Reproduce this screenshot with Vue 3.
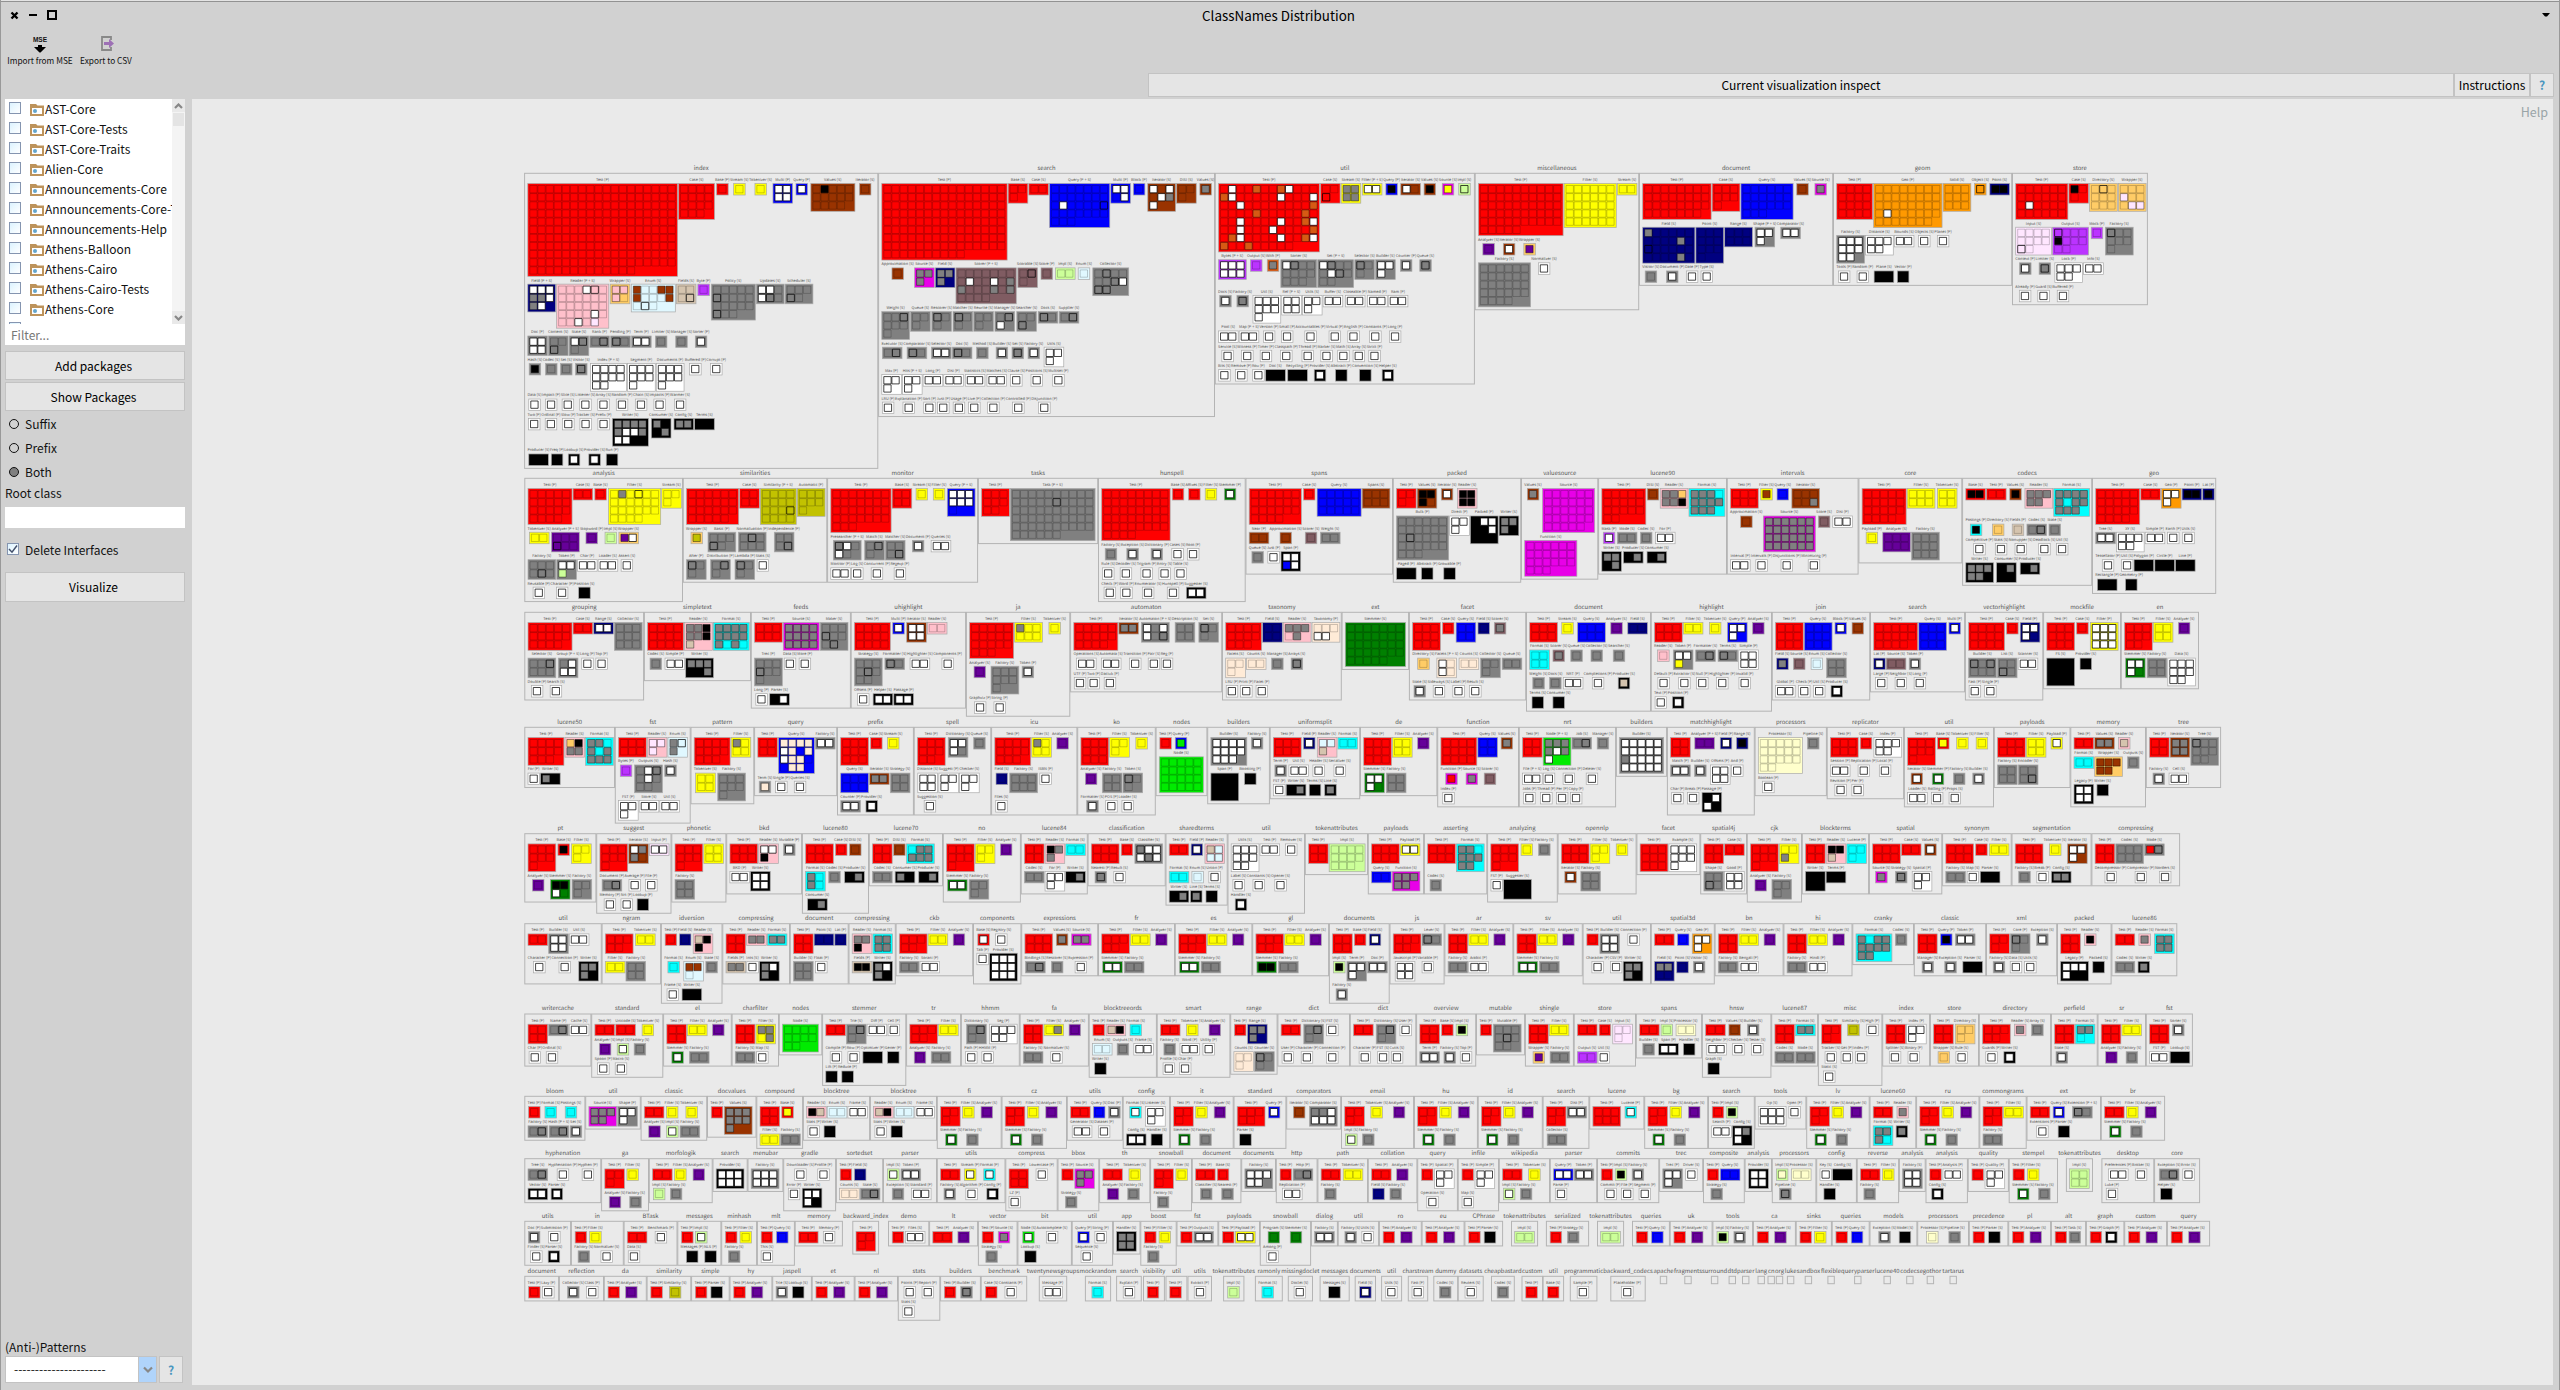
<script setup>
const packages = [
  'AST-Core', 'AST-Core-Tests', 'AST-Core-Traits', 'Alien-Core', 'Announcements-Core',
  'Announcements-Core-T', 'Announcements-Help', 'Athens-Balloon', 'Athens-Cairo',
  'Athens-Cairo-Tests', 'Athens-Core', ''
]
const modes = ['Suffix', 'Prefix', 'Both']
const selectedMode = 'Both'

const palette = {
  r: '#ff0000', b: '#0000ff', y: '#ffff00', n: '#993300', g: '#808080', w: '#ffffff', k: '#000000',
  N: '#000080', p: '#ffc0cb', m: '#e800e8', v: '#bb33ff', l: '#ccff99', c: '#00ffff', e: '#e0f8ff',
  o: '#ff9900', t: '#ffcc66', a: '#d5c4ae', u: '#660099', G: '#008000', L: '#00eb00', s: '#805c62',
  O: '#c2c200', i: '#ffe6ff', z: '#ffffcc', x: '#ffebd7', d: '#d65a14'
}

// Package line: name x [end] | groups, ";" between rows of groups.
// Group: Label + P/S/B, colour, columns:count, =cell colours ("." own colour, "D" own colour with dark outline).
const bands = [
  [173.3, `
index 524.6 | Test P r18:193,Case S r4:15,Base P r,Stream S y,Tokenizer S y,Multi P b2:4=wwww,Query P b=w,Values S n5:14=.k,Iterator S n;Field B N3:8=wwwggwgw,Reader B p6:29=...wD.................w...w.i,Wrapper S t2:4=ppp,Enum S e5:13=n..nnn...n.D.,Fields S a2:4=...D,Byte P v,Policy S g5:18=.....D.........D,Updates S g3:6=ww.wD.,Scheduler S g3:5=...D;Doc P g2:4=wwww,Content S g2:3=..D,State S g2:3=wD.,Rank P g2:2=.D,Pending P g2:2=D.,Term P g2:2=ww,Limiter S g,Manager S g,Sorter P g=w;Hash S g=k,Codec S g,Set S g,Visitor S g=D,Index B w4:10,Segment P w3:7,Documents P w3:7,Buffered P w,Corrupt P w;Data S w,Impact P w,Slice S w,Listener S w,Array S w,Random P w,Chain S w,Impacts P w,Warmer S w;Two P w,Ordinal P w,Slow P w,Tracker S w,Prefix P w,Writer S k4:12=gggggwwgww,Consumer S k2:4=g..g,Config S k2:2=gg,Terms S k2:2;Producer S k2:2,Freq P k,Lookup S k=w,Provider S k=w,Run P k
search 878.6 | Test P r15:130,Base S r2:3,Case S r2:2,Query B b7:31=...............w....D,Multi P b2:4=ww.w,Block P b,Iterator S n3:7=w.w.wgw,DISI S n2:3,Values S n=g;Approximation S n,Source S m2:3=ggg,Field S N2:3=ggg,Scorer B s7:25=........w..w.gg...g.g,Scorable S s2:3=.D.,Score P s,Impl S l2:2,Enum S e,Collector S g4:10=.D....DwDD;Weight S g3:7=..D,Queue S g2:3,Rescorer S g2:3=D,Matcher S g2:3=D,Rewrite S g2:3,Manager S g2:3=.Dw,Searcher S g2:3=..D,Docs S g2:2=D,Supplier S g2:2=.D;Executor S g2:2=.D,Comparator S g2:2=D,Selector S g2:2=ww,Doc S g2:2=D,Method S g,Builder S g=w,Set S g=D,Factory S g=w,Utils S w2:3;Max P w2:3,Hits B w2:3,Long P w2:2,Disi P w2:2,Statistics S w2:2,Matches S w2:2,Clause S w,Positions S w,Multiset P w;LRU P w,Explanation P w,Sort P w,Just P w,Usage P w,Live P w,Collection P w,Controlled P w,Disjunction P w
util 1215.3 | Test P r12:93=.w..d..dw...dw.....w...w..w........d....d.....d...w....w..dw..w...w....d.dw....w..dwd..d,Case S r2:3=..D,Stream S y2:4=gggg,Filter B y2:2=ww,Query P b=k,Iterator S n2:2=w.,Values S n=k,Source S m=y,Impl S l=D;Bytes B v3:6=wwwwww,Output S v,With P d=g,Sorter S g4:11=wD,Set B g4:10=wD...wD,Selector S g2:3=D,Builder S g2:3=www,Counter P g=w,Queue S g=D;Docs S g=w,Factory S g=D,Util S w3:7,Ref B w2:4,Utils S w2:3,Buffer S w2:2,Closeable P w2:2,Named P w2:2,Ram P w2:2;Pool S w2:2,Map B w2:2,Version P w,Small P w,Accountables P w,Virtual P w,English P w,Constants P w,Long P w;Service S w,Witness P w,Timer P w,Classpath P w,Thread P w,Marker S w,Math S w,Array S w,Strict P w;Bits S w,Remove P w,Rou P w,Doc S k2:2,Recycling P k2:2,Provider S k=w,Abstract P k,Convention S k,Helper S k=w
miscellaneous 1475.2 | Test P r10:55,Filter S y6:30,Stream S y2:2;Analyzer S u,Iterator S n=w,Wrapper S t=u;Factory S g6:28,Normalizer S w
document 1639.5 | Test P r8:31,Case S r3:7,Query S b6:21,Values S n,Source S m=g;Field S N6:24=g.........g.D.........g.,Point S N3:10,Range S N3:6,Shape B g2:3=www,Comparator S g2:2=ww;Visitor S g,Document P g=w,Date P w,Type S w
geom 1833.5 | Test P r4:16,Geo P o8:39=.........................w,Solid S o3:9,Object S o=D,Point S N2:2=kk;Factory S g3:8=wwwwwwww,Distance S w3:5,Bounds S w2:2,Objects S w,Planet P w;Tools P w,Random P w,Plane S k2:2,Vector P k
store 2012.5 2147.4 | Test P r6:24=.............w,Case S r2:3=k,Directory S t3:9=.D,Wrapper S t3:9=...i...ii;Input S i4:10=........D.,Output S v4:10=D...k,Mock P v,Factory S g3:7=D;Context P g=w,Limiter S g=D,Lock P w3:5,Info S w2:2;Already P w,Guard S w,Buffered P w`],
  [478.3, `
analysis 524.8 | Test P r5:19,Case S r2:2,Base S r,Filter S y6:22=.g.D,Stream S y2:3;Tokenizer S y2:2,Analyzer B u3:6=...D,Stopword P u,Impl S l,Wrapper S t2:2=uw;Factory S g3:6=....D,Token P g2:3=wwl,Char P w2:2,Loader S w2:2,Assert S w;Reusable P w,Character P w,Position S k
similarities 683.3 | Test P r6:23,Case S r2:4,Similarity B O4:16=...........D,Automatic P O3:7;Wrapper S t=O,Basic P g3:5=...D,Normalization P g3:6=.D,Independence P g2:4=...D;After P g2:3=D,Distribution P g2:3=.D,Lambda P g2:3=D,Stats S w
monitor 827.6 | Test P r7:31,Base S r2:4,Stream S y,Filter S y,Query B b3:7=wwwwww;Presearcher B g3:5=Dw.w,Match S g2:3=.D,Matcher S g2:4=...D,Document P g=w,Queries S w2:2;Monitor P w2:2,Log S w,Concurrent P w,Regexp P w
tasks 978.4 | Test P r3:8,Task B g10:56=...............D
hunspell 1098.5 | Test P r8:44,Base S r,Affixes S r,Filter S y,Stemmer P G=w;Factory S g,Exception S g=w,Dictionary P g=w,Cases S w,Root P w;Rule S w,Decoder S w,Trigram P w,Entry S w,Table S w;Check P w,Word P w,Enumerator S w,Hunspell P w,Suggester S k2:2=ww
spans 1246 | Test P r6:22,Case S r,Query S b5:15,Spans S n3:6;Near P n2:2,Approximation S n,Scorer S s,Weight S g2:2;Queue S g,Just P w,Span P k2:4=wwbw
packed 1393.3 | Test P r2:3,Values S n2:4=kkk,Iterator S n=w,Reader S p2:4=kkkk;Bulk P g6:27=.............D,Direct P w2:3,Packed P k3:9=.ww..w,Writer S k2:4=ggg;Paged P k2:2,Abstract P k,Growable P k
valuesource 1521.5 | Values S n=g,Source S m6:29;Function S m6:21
lucene90 1598.6 | Test P r5:17,DISI S n,Reader S p3:6=ggtggk,Format S c4:11=ggg.ggggggg;Mask P v=w,Mode S g2:2,Codec S g,For P w2:2;Writer S k2:4=gg.g,Producer S k2:2=.g,Consumer S k2:2=.g
intervals 1727.3 | Test P r3:6,Filter S y=n,Query S b,Iterator S n3:6=.....g;Approximation S n,Source S m6:24=gggggggggggggggggggggggg,Score S s,Disi P w2:2;Interval P w2:2,Intervals P w,Disjunctions P w,Minimizing P w
core 1858.9 | Test P r5:19,Filter S y3:6,Tokenizer S y2:4;Payload P y,Analyzer S u3:6,Factory S g3:9
codecs 1962.6 | Base S r2:2=kk,Test P r2:2,Values S n=k,Reader S p3:5=ggggg,Format S c4:11=ggggg.ggggg;Postings P c=k,Directory S t,Fields P a,Codec S g2:2=.D,State S g;Competitive P w,Stats S w,Nonupper S w,Deadlock S w,Util S w;Writer S k3:5=ggggg,Consumer S k2:4=.g,Producer S k2:2=.g
geo 2092.5 2215.7 | Test P r5:19,Case S r2:2,Geo P o2:3=www,Point P N2:2=kk,Lat P N=k;Tree S g2:2=ww,XY S w3:5,Simple P w2:2,Earth P w,Utils S w;Tessellator P w,Util S w,Polygon P k2:2,Circle P k2:2,Line P k2:2;Rectangle P k2:2,Geometry P k`],
  [612.3, `
grouping 524.8 | Test P r5:14,Case S r2:2,Range S N2:2=ww,Collector S g3:9;Selector S g3:6=..D,Group B g2:4=.www,Long P w,Top P w;Double P w,Search S w
simpletext 644.4 | Test P r4:12,Reader S p3:7=ggkggka,Format S c4:12=ggggggggg.g.;Codec S g,Simple P w2:2,Writer S k3:6=ggg..g
feeds 751.3 | Test P r3:6,Source S m4:12=gggggggggggg,Maker S g3:8=...D...D;Trec P g3:7=...D,Data S w,More P w;Long P w,Parser S k2:2=.w
uhighlight 851.2 | Test P r4:12,Multi P b=w,Iterator S n2:4=wwww,Reader S p2:2;Strategy S g3:8=....D,Formatter S g2:2=D,Highlighter S w2:2,Components P w;Offsets P w,Helper S k2:2=ww,Passage P k2:2=ww
ja 966.4 | Test P r5:18,Filter S y3:6=g,Tokenizer S y;Analyzer S u,Factory S g3:7,Token P g=w;Graphviz P w,String P w
automaton 1070.6 | Test P r5:14,Iterator S n2:2=gg,Automaton B g3:6=w.ww.D,Description S g2:4,Set S g2:3=D;Operations S w2:2,Automata S w2:2,Transition P w,Pair S w,Reg P w;UTF P w,Two P w,Daciuk P w
taxonomy 1222.5 | Test P r4:11,Field S N2:4,Reader S p3:5=ggg.g,Taxonomy P x3:5=...ww;Facets S x2:3,Counts S x2:2,Manager S g,Arrays S g=D;LRU P w,Print P w,Facet P w
ext 1342.1 | Stemmer S G7:33
facet 1409.4 | Test P r3:9,Case S r,Query S b2:4,Field S N,Scorer S s=g;Directory S t,Facets B x2:4=w.w.,Counts S x2:2,Collector S g2:3,Queue S g2:2;State S g=w,Sideways S w,Label P w,Result S w
document 1526.5 | Test P r3:6,Stream S y,Query S b3:6,Analyzer S u,Field S N2:2;Format S c2:4,Scorer S s=g,Queue S g,Collector S g,Searcher S g;Weight S g,Docs S g,NRT P w2:2,Completions P w,Producer S k=a;Terms S k,Consumer S k
highlight 1651.3 | Test P r3:6,Filter S y2:2,Tokenizer S y,Query P b2:3=www,Analyzer S u;Reader S p,Token P g2:3=wwy,Formatter S g2:2=.D,Terms S g2:2=D,Simple P w2:4;Default P w,Extractor S w,Null P w,Highlighter P w,Invalid P w;Text P w,Position P k=w
join 1772.3 | Test P r3:9,Query S b3:9,Block P b=w,Values S n;Field S N=g,Source S s,Enum S e,Collector S g2:4;Global P w2:2,Check P w,Util S w,Producer S k=w
search 1870.5 | Test P r5:14,Query S b3:9,Multi P b=w;Lat P N=w,Source S s2:2,Token P g=w;Large P w,Neighbor S w,Long P w
vectorhighlight 1965.4 | Test P r4:12,Case S r,Field P N2:4=www;Builder S g3:6=D.D,List S g2:4=..D,Scanner S w2:2;Fast P w,Single P w
mockfile 2043.6 | Test P r3:9,Case S r,Filter P y3:9=wwwwwwwww;FS S k3:9,Provider S k
en 2121.3 2198.5 | Test P r3:8,Filter S y2:4,Analyzer S u;Stemmer S G2:4=www,Factory S g2:4,Data S w3:8`],
  [727.3, `
lucene50 524.8 | Test P r4:11,Reader S p2:4=tkgg,Format S c3:9=gg.g.gggg;For P w,Writer S k2:2=g
fst 615.3 | Test P r3:6,Reader S p2:3=iii,Enum S e2:3=gDg;Bytes P v,Outputs S g3:8=.wD.w,Hash S g=w;FST P w2:3,Store S w2:2,Util S w2:2
pattern 691 | Test P r4:11,Filter S y2:4=g;Tokenizer S y2:4,Factory S g3:7
query 754.6 | Test P r2:4,Query S b4:15=xxxxwx.xwxx..xx,Factory S g2:2=ww;Term S g=x,Single P w,Queries S w
prefix 837.5 | Test P r3:9,Case S r,Stream S y;Query S b3:6,Iterator S n2:2=gg,Strategy S g2:4;Counter P g2:2=ww,Provider S k=w
spell 914.2 | Test P r3:8,Dictionary S g2:4=www,Queue S g;Distance S w2:4,Suggest P w2:3,Checker S w2:3;Suggestion S w
icu 991.6 | Test P r4:11,Filter S y2:4=g,Analyzer S u;Field S N,Factory S g3:6,ISBN P w;Files S w
ko 1077.7 | Test P r3:9,Filter S y2:3,Tokenizer S y;Analyzer S u,Factory S g2:4,Token S g2:3=D;Formatter S g=w,POS P w,Loader S w
nodes 1156.1 | Test P r,Query P b=L;Node S L5:20
builders 1207.7 | Builder S g4:11=wwwwwwwwwww,Factory S g=w;Span P k3:9,Boosting P k
uniformsplit 1270.2 | Test P r3:6,Field P N=w,Reader S p2:3=eea,Format S c2:2;Term P g=w,Util S w2:2,Header S w,Serializer S w;FST P w,Writer S k2:2=.g,Terms S k,Line S k=g
de 1360.5 | Test P r3:9,Filter S y2:4,Analyzer S u;Stemmer S G2:4=www,Factory S g2:4
function 1437.7 | Test P r4:12,Query S b2:4,Values S n=g;Function P m=r,Source S m=g,Scorer S s;Index P w
nrt 1519.3 | Test P r2:4,Node B L3:7=ggggwgw,Job S g2:2=.D,Manager S g;File B w2:2,Log S w,Connection P w,Deleter S w;Jobs P w,Thread P w,Per P w,Copy P w
builders 1616.4 | Builder S g5:20=wwwwwwwwwwgwwwwwwwww
matchhighlight 1667.4 | Test P r2:4,Analyzer B u2:2,Field P N=w,Range S N=k;Match P g2:2=ww,Builder S g=w,Offsets P w2:4,And P w;Char P w,Break P w,Passage P k2:4=.ww.
processors 1755.1 | Processor S z5:17,Pipeline S g;Boolean P w
replicator 1827.2 | Test P r3:6,Case S r,Index P w3:5;Session P w2:2,Replication P w,Local P w;Revision P w,Per P w
util 1904.4 | Test P r3:7,Base S r=y,Tokenizer S y,Filter S y;Iterator S n=w,Stemmer P G=w,Factory S g,Builder S g=w;Loader S w2:2,Rolling P w,Props S w
payloads 1994.3 | Test P r3:6,Filter S y2:4,Payload P y=w;Factory S g2:4,Encoder S g2:4=...D
memory 2070.8 | Test P r2:2,Values S n2:2=gg,Reader S p=a;Format S c2:2,Wrapper S t3:5=nnnnn,Outputs S g;Legacy P k2:4=wwww,Writer S k
tree 2146.3 2220.6 | Test P r2:4,Iterator S n2:4=gggg,Tree S g3:8=D;Factory S g=w,Cell S w2:2`],
  [833.7, `
pt 524.8 | Test P r3:7,Base S r=k,Filter S y2:3;Analyzer S u,Stemmer S G2:4=kkw,Factory S g2:3
suggest 596.7 | Test P r3:7,Iterator S n2:4=wgg,Input P i2:2=ww;Document P g2:2=.D,Average P w,File P w;Memory P w,Nrt P w,Lookup P k
phonetic 671.8 | Test P r3:7,Filter S y2:4;Factory S g2:4
bkd 726.7 | Test P r3:6,Reader S p2:3=wwk,Mutable P g=w;BKD P w2:2,Writer S k2:4=wwww
lucene80 802.4 | Test P r3:6,Case S r,DISI S n;Format S c2:4=g.g.,Codec S g,Producer S k2:2=.g;Consumer S k2:2=.g
lucene70 869.3 | Test P r2:4,DISI S n,Format S c3:6=.ggggg;Codec S g2:2,Consumer S k2:2=g,Producer S k2:2=.g
no 943.3 | Test P r3:7,Filter S y2:3,Analyzer S u;Stemmer S G2:2=ww,Factory S g2:3
lucene84 1021.2 | Test P r2:4,Reader S p2:3=kgg,Format S c2:2;Codec S g2:2,For P w2:3,Writer S k2:2=.g
classification 1088.1 | Test P r3:6,Base S r,Classifier S g3:6=DwwwDw;Nearest P g=D,Result S w
sharedterms 1166 | Test P r2:2,Field P N=w,Reader S p2:4=aeee;Format S c2:2,Enum S e,Union P w;Writer S k2:2=.g,Line S k=g,Terms S k
util 1228 | Utils S w3:8,Test P w2:2,Remover S w;Label S w,Constants S w,Opener S w;Handler S k=w
tokenattributes 1305.3 | Test P r2:4,Impl S l4:11
payloads 1368.3 | Test P r3:6,Payload P y2:2=ww;Query S b2:2,Function S m3:5=ggggg
asserting 1424.4 | Test P r3:6,Format S c3:8=gg.ggggg;Codec S g
analyzing 1487.6 | Test P r3:7,Filter S y,Factory S g;FST P w,Suggester S k3:6
opennlp 1558.1 | Test P r3:6,Filter S y2:3,Tokenizer S y;Iterator S n=w,Factory S g2:4
facet 1636.9 | Test P r3:9,Example S w3:7
spatial4j 1700.7 | Test P r2:4,Case S r2:2;Shape S g2:4=..D,Good P w2:4
cjk 1747.3 | Test P r3:7,Filter S y2:3=..g;Analyzer S u,Factory S g2:3
blockterms 1802.3 | Test P r2:4,Reader S p2:3=kka,Lucene P c2:3;Writer S k2:4,Terms P k2:2
spatial 1869.4 | Test P r3:6,Case S r2:2,Values S n=w;Source S m=g,Strategy S g=D,Spatial P w2:3
synonym 1942.6 | Test P r3:6,Case S r,Filter S y2:2;Factory S g2:2,Map S w,Parser S k2:2
segmentation 2012 | Test P r3:6,Tokenizer S y,Iterator S n2:3=www;Factory S g,Break P w,Config S k2:2=gg
compressing 2091.9 2179.6 | Test P r2:4,Codec S g3:6,Mode S g2:2=rD;Decompressor P w,Compressor P w,Norders S w`],
  [923.7, `
util 524.8 | Test P r2:2,Builder S g2:4=wwww,Util S w2:2;Character P w,Connection P w,Writer S k2:4=ggg
ngram 602.1 | Test P r3:5,Tokenizer S y2:2;Filter S y2:2,Factory S g2:4
idversion 661.4 | Test P r,Field S N,Reader S p2:3=akk;Format S c,Enum S e2:3=nn.,State S g;Frame S w,Writer S k2:2
compressing 722.8 | Test P r2:4,Reader S p2:2=gg,Format S c2:2=gg;Fields P a2:2=gg,Ints S w,Writer S k2:4=gwg
document 790.3 | Test P r2:4,Point S N2:2,Lat P N;Builder S g2:4,Float P w
compressing 849 | Reader S p2:3=ggk,Format S c2:4=gggg;Fields P a2:2=kk,Writer S k2:3=gwg
ckb 896.1 | Test P r3:5,Filter S y2:2,Analyzer S u;Factory S g2:2,Sorani P w2:2
components 973.5 | Base S r=w,Registry S w;Tab P w,Provider S k3:9=wwwwwwwww
expressions 1021.7 | Test P r3:6,Values S n=g,Source S m2:2=gg;Bindings S g2:2=.D,Rescorer S g,Expression P w
fr 1098.5 | Test P r3:5,Filter S y2:2,Analyzer S u;Stemmer S G2:2=ww,Factory S g2:2
es 1175.3 | Test P r3:5,Filter S y2:2,Analyzer S u;Stemmer S G2:2=ww,Factory S g2:2
gl 1252.7 | Test P r3:5,Filter S y2:2,Analyzer S u;Stemmer S G2:2=kk,Factory S g2:2
documents 1329.4 | Test P r2:4,Base S r,Field S N=w;Impl S l=k,Term P g2:3=www,Doc P g2:2=ww;Factory S g=w
js 1390 | Test P r3:5,Lexer S g2:2=D;Javascript P w2:4,Variable P w
ar 1444.9 | Test P r2:4,Filter S y2:2,Analyzer S u;Factory S g2:2,Arabic P w2:2
sv 1513.7 | Test P r2:4,Filter S y2:2,Analyzer S u;Stemmer S G2:2=ww,Factory S g2:2
util 1583.1 | Test P r,Builder S g2:4=wwww,Connection P w;Character P w,CSV P w,Writer S k2:4=ggg
spatial3d 1651.3 | Test P r2:2,Query S b,Geo P o2:3=www;Field S N2:4=gg,Point S N,Visitor S g=w
bn 1715.1 | Test P r2:4,Filter S y2:2,Analyzer S u;Factory S g2:2,Bengali P w2:2
hi 1783.9 | Test P r2:4,Filter S y2:2,Analyzer S u;Factory S g2:2,Hindi P w2:2
cranky 1852.8 | Format S c4:10=g.gggggggg,Codec S g
classic 1914.3 | Test P r2:4,Query P b=k,Token P g2:2=ww;Manager S g=w,Exception S g=w,Parser S k2:2
xml 1986.5 | Test P r2:3,Core P g2:3=D,Exception S g=w;Factory S g=w,Data S w,Utils S w
packed 2057.5 | Test P r2:4,Reader S p=k;Legacy P k3:5=wwww,Packed S k
lucene86 2111.9 2176.8 | Test P r2:2,Reader S p=g,Format S c2:4=gggg;Codec S g2:2,Writer S k=g`],
  [1014, `
writercache 524.8 | Test P r2:4,Name P g2:2=.D,Cache S w2:2;Char P w,Ordinal S w
standard 591.7 | Test P r2:2,Unicode S r2:2,Tokenizer S y;Analyzer S u,Impl S l=w,Factory S g;Spoon P w,Macro S w
el 663.6 | Test P r2:4,Filter S y2:2,Analyzer S u;Stemmer S G=w,Factory S g2:2
charfilter 732.1 | Test P r2:4,Filter S y2:4=gg.g;Factory S g2:2,Map S w
nodes 779.3 | Node S L4:10
stemmer 822.6 | Test P r2:2,Trie S g2:3=.D,Diff P w2:2,Cell P w;Compile P w,Row P w,Optimizer P k2:2,Gener P k;Lift P k,Reduce P k
tr 906.6 | Test P r3:5,Filter S y2:2;Analyzer S u,Factory S g2:2
hhmm 961.4 | Dictionary S g2:3=.D,Seg P w3:5;Path P w,HHMM P w
fa 1020.1 | Test P r2:4,Filter S y2:2=.g,Analyzer S u;Factory S g2:2,Normalizer S w
blocktreeords 1089.2 | Test P r,Reader S p2:2=ak,Format S c;Enum S e2:2,Outputs S g,Frame S w2:2;Writer S k
smart 1157.2 | Test P r2:2,Tokenizer S y,Analyzer S u;Factory S g,Word P w2:2,Utility P w;Profile S w,Char P w
range 1230.7 | Test P r,Range S N2:3=ggg;Counts S x2:3,Counter S g2:3=D
dict 1277.9 | Test P r2:2,Dictionary S g2:3=.D,FST S w;User P w,Character P w,Connection P w
dict 1350.3 | Test P r2:2,Dictionary S g2:3=.D,User P w;Character P w,FST S w,Cutis S w
overview 1416.6 | Test P r2:4,Base S r,Impl S l=k;Term P g2:2=ww,Factory S g=w,Top P w
mutable 1476.5 | Test P r,Mutable P g3:8=....D
shingle 1525.4 | Test P r2:4,Filter S y2:2;Wrapper S t=u,Factory S g2:2
store 1574.2 | Test P r2:2,Case S r,Input S i2:3;Output S v2:2,Util S w
spans 1636.3 | Test P r2:2,Impl S l,Processor S z2:2;Builder S g,Span P k2:2=ww,Handler S k
hnsw 1702.4 | Test P r2:2,Values S n,Builder S g=w;Neighbor P w2:2,Checker S w,Tester S w;Graph S k
lucene87 1771.7 | Test P r2:4,Format S c2:2=gg;Codec S g2:2,Mode S g2:2
misc 1818.4 | Test P r2:3,Similarity S O,High P w;Tracker S w,Get P w,Index P w;Static S w
index 1882.7 | Test P r2:4,Index P w2:3;Splitter S w,Binary P w
store 1930.4 | Test P r2:4,Directory S t2:3;Wrapper S t,Rule S w
directory 1979.3 | Test P r3:5,Reader S p=g,Array S g;Guards P w,Writer S k=w
perfield 2051.4 | Test P r2:4,Format S c2:3=gg.;State S g=w
sr 2098 | Test P r2:4,Filter S y2:2;Analyzer S u,Factory S g
fst 2146.3 2192.4 | Test P r2:4,Sorter S g=w;FST P w2:2,Lookup S k2:2`],
  [1096.3, `
bloom 524.8 | Test P r,Format S c,Postings S c;Factory S g2:2=.D,Hash B g2:2=.D,Set S g=w
util 585.7 | Source S m3:5=ggggg,Shape P g2:3=www
classic 641.1 | Test P r2:2,Filter S y,Tokenizer S y;Analyzer S u,Impl S l=w,Factory S g2:2
docvalues 707.5 | Test P r,Values S n3:7=ggggggg
compound 756.8 | Test P r2:4,Base S r=y;Filter S y2:2,Factory S g2:2
blocktree 803.4 | Reader S p2:2=ka,Enum S e2:2,Frame S w2:2;Stats P w,Writer S k
blocktree 870.4 | Reader S p2:2=ak,Enum S e2:2,Frame S w2:2;Stats P w,Writer S k
fi 937.3 | Test P r2:3,Filter S y,Analyzer S u;Stemmer S G=w,Factory S g
cz 1002 | Test P r2:3,Filter S y,Analyzer S u;Stemmer S G=w,Factory S g
utils 1067.3 | Test P r2:2,Query S b,Doc P g=w;Generator S w2:2,Dataset P w
config 1123.2 | Format S c=w,Listener S w2:3;Config S k2:2=ww,Handler S k
it 1170.4 | Test P r2:3,Filter S y,Analyzer S u;Stemmer S G=w,Factory S g
standard 1234 | Test P r3:5,Query P b=w;Parser S k
comparators 1286.7 | Iterator S n,Comparator S g3:6=ggwwww
email 1341.5 | Test P r2:3,Tokenizer S y,Analyzer S u;Impl S l=w,Factory S g
hu 1414.4 | Test P r2:3,Filter S y,Analyzer S u;Stemmer S G=w,Factory S g
id 1478.2 | Test P r2:3,Filter S y,Analyzer S u;Stemmer S G=w,Factory S g
search 1543.1 | Test P r2:3,Dist P g2:2=ww;Collector S g2:2
lucene 1589.7 | Test P r3:6,Lucene P c=w
bg 1644.7 | Test P r2:3,Filter S y,Analyzer S u;Stemmer S G=w,Factory S g
search 1708.5 | Test P r,Impl S l=k;Search P w2:2,Config S k2:4=wgw
tools 1755.1 | Op S w3:6,Open P w
lv 1806.7 | Test P r2:3,Filter S y,Analyzer S u;Stemmer S G=w,Factory S g
lucene60 1870 | Test P r2:2,Reader S p=g;Format S c2:4=ggg,Writer S k=g
ru 1916.6 | Test P r2:3,Filter S y,Analyzer S u;Stemmer S G=w,Factory S g
commongrams 1979.8 | Test P r2:3,Filter S y2:2;Factory S g2:2
ext 2027 | Test P r2:2,Query S b=w,Extension B g2:2=D;Extensions P w,Parser S k
br 2101.3 2164.6 | Test P r2:2,Filter S y,Analyzer S u;Stemmer S G=w,Factory S g`],
  [1158.7, `
hyphenation 524.8 | Tree S g2:2=.D,Hyphenation P w,Hyphen P w;Vector S k2:2=ww,Parser S k=w
ga 601.6 | Test P r2:3,Filter S y;Analyzer S u,Factory S g
morfologik 649.3 | Test P r2:2,Filter S y,Analyzer S u;Impl S l,Factory S g
search 713 | Provider S k3:6=wwwwww
menubar 748 | Factory S g3:6=wwwwww
gradle 783.7 | Downloader S w,Profile P w;Error P w,Writer S k2:3=www
sortedset 836.4 | Test P r,Field S N;Counts S x2:2,State S g2:2=.D
parser 883.5 | Impl S l=w,Token P g2:2=ww;Exception S g,Standard P w2:2
utils 937.3 | Test P r2:2,Stream P y=w,Format P c=w;Factory S g=w,Algorithm P w,Config P k=w
compress 1005.8 | Test P r2:4,Lowercase P w;LZ P w
bbox 1058 | Test P r,Source S m2:3=ggg;Strategy S g
th 1099.6 | Test P r2:2,Tokenizer S y;Analyzer S u,Factory S g
snowball 1150.6 | Test P r2:3,Filter S y;Factory S g
document 1192.3 | Test P r2:2,Base S r;Classifier S g,Nearest P g
documents 1241.7 | Factory S g3:5=wwwww
http 1276.3 | Test P r,Http P g2:2=.D;Replication P w2:2
path 1317.9 | Test P r2:2,Tokenizer S y2:2;Factory S g
collation 1368.3 | Test P r2:2,Analyzer S u;Field S N,Factory S g
query 1417.7 | Test P r,Spatial P w2:3;Operation S w
infile 1458.2 | Test P r,Simple P w2:3;Map S w
wikipedia 1499.3 | Test P r2:2,Tokenizer S y;Impl S l=w,Factory S g
parser 1550.3 | Query P b2:2=ww,Token P g2:2=ww;Parse P w
commits 1597.5 | Test P r,Impl S l=k,Factory S g=w;Commit P w,File P w,Segment P w
trec 1659.6 | Trec P g2:3=www,Driver S w
composite 1703.5 | Test P r,Query S b2:2;Strategy S g
analysis 1745.1 | Provider S k2:4=wwww
processors 1772.3 | Impl S l=z,Processor S z2:2;Pipeline S g=D
config 1816.7 | Key S w,Config S k2:2;Handler S k
reverse 1857.2 | Test P r2:2,Filter S y;Factory S g
analysis 1899.4 | Factory S g2:4=wwww
analysis 1926 | Test P r,Analysis P w2:2;Config S k=w
quality 1968.2 | Test P r,Quality P w2:3
stempel 2009.2 2057.5 | Test P r,Filter S y;Stemmer S G=w,Factory S g
tokenattributes 2066.4 2092.5 | Impl S l2:4
desktop 2101.9 | Preferences P w2:2,Broker S w;Luke P w
core 2154.6 2199.6 | Exception S g2:2=.D,Error S w;Helper S k`],
  [1221.3, `
utils 524.8 | Doc P g=w,Submission P w;Finder S w,Parser S k=w
in 571.4 | Test P r,Filter S y;Factory S g,Normalizer S w
BTask 624.1 | Test P r2:2,Benchmark P w;Data S w
messages 677.8 | Test P r,Impl S l=w;Messages P k,NLS P k
minhash 721.7 | Test P r,Filter S y;Factory S g
mlt 757.4 | Test P r,Query S b;This S w
memory 795.2 842.4 | Test P r2:2,Memory P w
backward_index 852.8 878.6 | Test P r2:3
demo 888.5 | Test P r,Files S w2:2
lt 929.6 | Test P r2:2,Analyzer S u
vector 978.4 | Test P r,Source S m=g;Strategy S g
bit 1017.9 | Node S L=w,Autocomplete S w;Lookup S k
util 1072.2 | Query P b=w,String P w;Sequence S w
app 1113.4 | Handler S k2:4=gggg
boost 1140.8 | Test P r,Filter S y;Factory S g
fst 1177 | Test P r,Outputs S g2:2=ww
payloads 1218.7 | Test P r,Payload P y2:2=ww
snowball 1260.3 | Program S G,Stemmer S G;Among P w
dialog 1311.4 | Factory S g2:2=ww
util 1338.2 | Factory S g=w,Utils S w
ro 1379.4 | Test P r,Analyzer S u
eu 1422.1 | Test P r,Analyzer S u
CPhrase 1464.9 1502.6 | Test P r,Parser S k
tokenattributes 1511.5 1537.6 | Impl S l2:2
serialized 1546.4 1588.6 | Test P r,Strategy S g
tokenattributes 1597.5 1623.6 | Impl S l2:2
queries 1632.5 | Test P r,Query S b
uk 1670.2 | Test P r,Analyzer S u
tools 1712.9 | Impl S l=k,Factory S g=w
ca 1753.4 | Test P r,Analyzer S u
sinks 1796.2 | Test P r,Filter S y
queries 1832.2 | Test P r,Query S b
models 1870 | Exception S g=w,Model S k
processors 1917.7 | Processor S z,Pipeline S g
precedence 1969.3 | Test P r,Parser S k
pl 2008.7 | Test P r,Analyzer S u
alt 2051.4 | Test P r,Task S g
graph 2086.4 | Test P r,Graph P k=w
custom 2124.7 | Test P r,Analyzer S u
query 2167.4 2209.6 | Test P r,Analyzer S u`],
  [1276.3, `
document 524.8 | Test P r,Lazy P w
reflection 559.4 | Collector S g=w,Class P w
da 604.3 | Test P r,Analyzer S u
similarity 647.1 | Test P r,Similarity S O
simple 691.6 | Test P r,Parser S k
hy 730 | Test P r,Analyzer S u
jaspell 772.7 | Trie S g=w,Lookup S k
et 812.2 | Test P r,Analyzer S u
nl 855 | Test P r,Analyzer S u
stats 898.3 | Points P w,Report P w;Stats S w
builders 940.6 | Test P r,Builder S g=D
benchmark 981.2 1026.7 | Case S r,Constants P w
twentynewsgroups 1039.3 1066.7 | Message P w2:2
mockrandom 1085.4 1110.6 | Format S c
search 1116.6 1141.3 | Explain P w
visibility 1143.5 1164.4 | Test P r
util 1166 1186.9 | Test P r
utils 1188 1211.5 | Extract P w
tokenattributes 1223.6 1243.9 | Impl S l
ramonly 1255.4 1282.3 | Format S c
missingdoclet 1288.3 1312.5 | Doclet S w
messages 1320.1 1349.2 | Messages S k
documents 1355.2 1375.5 | Field S N=w
util 1381.6 1401.6 | Utils S w
charstream 1408.3 1427.7 | Fast P w
dummy 1433.8 1457.7 | Codec S g
datasets 1458.2 1483.2 | Reuters S w
cheapbastard 1491.5 1514.3 | Codec S g
custom 1522 1542.6 | Test P r
util 1543.1 1563.6 | Base S r
programmatic 1570.3 1596.9 | Sample P w
backward_codecs 1610.8 1645.2 | Placeholder P w
apache 1660.3 1666.7 |
fragments 1684.8 1691.2 |
surround 1711.4 1717.8 |
dtd 1729.1 1735.5 |
parser 1742.5 1748.9 |
lang 1758 1764.4 |
cn 1768 1774.4 |
org 1776.3 1782.7 |
luke 1787.4 1793.8 |
sandbox 1805.2 1811.6 |
flexible 1827.9 1834.3 |
queryparser 1854.6 1861 |
lucene40 1884 1890.4 |
codecs 1906.7 1913.1 |
egothor 1927.2 1933.6 |
tartarus 1950 1956.4 |`]
]

const PITCH = 8.13
const LABEL_SIZE = 3.85
const TITLE_SIZE = 5.9
const suffixText = { P: '(P)', S: '(S)', B: '(P + S)' }

const ctx = document.createElement('canvas').getContext('2d')
ctx.font = '100px "Noto Sans CJK SC", sans-serif'
const textWidth = (text, size) => (ctx.measureText(text).width * size) / 100

function parseGroup(src) {
  const [name, suffix, spec] = src.trim().split(' ')
  const [shape, cells = ''] = spec.split('=')
  const [cols, count] = shape.length > 1 ? shape.slice(1).split(':').map(Number) : [1, 1]
  const rows = Math.ceil(count / cols)
  const text = `${name} ${suffixText[suffix]}`
  const label = textWidth(text, LABEL_SIZE)
  const w = cols * PITCH + 4
  return { text, color: shape[0], cells, cols, count, w, h: rows * PITCH + 4, label, slot: Math.max(w, label) }
}

const square = (x, y) => `M${x.toFixed(1)} ${y.toFixed(1)}h7.3v7.3h-7.3z`

function placeGroup(g, left, top) {
  const x = left + (g.slot - g.w) / 2
  let plain = ''
  const marked = []
  for (let i = 0; i < g.count; i++) {
    const cx = x + 2.4 + (i % g.cols) * PITCH
    const cy = top + 2.4 + Math.floor(i / g.cols) * PITCH
    const code = g.cells[i] || '.'
    if (code !== '.') {
      marked.push({ d: square(cx, cy), fill: palette[code === 'D' ? g.color : code], soft: code !== 'D' && code !== 'w' })
    } else if (g.color === 'w') {
      marked.push({ d: square(cx, cy), fill: palette.w, soft: false })
    } else {
      plain += square(cx, cy)
    }
  }
  return { ...g, x, y: top, plain, marked, mid: left + g.slot / 2, fill: palette[g.color] }
}

const frames = bands.flatMap(([top, source]) => {
  const lines = source.trim().split('\n').map((line) => {
    const [head, body] = line.split('|')
    const [name, x, end] = head.trim().split(' ')
    return { name, x: +x, end: end && +end, body: body.trim() }
  })
  return lines.map((p, i) => {
    const end = p.end || lines[i + 1].x - 0.8
    const groups = []
    let y = top + 9.8
    if (p.body) {
      for (const row of p.body.split(';')) {
        const items = row.split(',').map(parseGroup)
        let x = p.x + 2.8
        for (const g of items) {
          groups.push(placeGroup(g, x, y))
          x += g.slot + 0.4
        }
        y += Math.max(...items.map((g) => g.h)) + 7.2
      }
    }
    return { name: p.name, x: p.x, y: top, w: end - p.x, h: p.body ? y - 7.2 + 2.7 - top : 7.4, groups }
  })
})
</script>

<template>
  <div class="window">
    <header class="titlebar">
      <svg class="controls" width="60" height="30" viewBox="0 0 60 30">
        <path d="M11.5 12.5l6 6M17.5 12.5l-6 6" stroke="#000" stroke-width="2.4" />
        <path d="M29 15h8" stroke="#000" stroke-width="2" />
        <rect x="48" y="11" width="8" height="8" fill="none" stroke="#000" stroke-width="2" />
      </svg>
      <h1>ClassNames Distribution</h1>
      <svg class="menu" width="10" height="6" viewBox="0 0 10 6"><path d="M1 1h8L6 4.500H4z" /></svg>
    </header>

    <div class="toolbar">
      <div class="tool import">
        <span class="mse">MSE</span>
        <svg width="12" height="8" viewBox="0 0 12 8"><path d="M4 0h4v2h4L6.500 7.500h-1L0 2h4z" /></svg>
        <span class="caption">Import from MSE</span>
      </div>
      <div class="tool export">
        <svg width="14" height="16" viewBox="0 0 14 16">
          <path d="M10 4V1H1v13h9v-3" fill="none" stroke="#888" stroke-width="1.8" />
          <path d="M3 6h5V3l5 4.500L8 12V9H3z" fill="#9d70b5" />
        </svg>
        <span class="caption">Export to CSV</span>
      </div>
    </div>

    <nav class="tabs">
      <div class="tab current">Current visualization inspect</div>
      <div class="tab instructions">Instructions</div>
      <div class="tab question">?</div>
    </nav>

    <div class="body">
      <aside class="side">
        <div class="list">
          <ul>
            <li v-for="name in packages" :key="name">
              <i class="check"></i>
              <svg width="14" height="12" viewBox="0 0 14 12">
                <path d="M0 0h6l1.500 1.500H14V12H0z" fill="#bd935b" />
                <path d="M2 4h10v6H2z" fill="#fff" />
                <circle cx="5" cy="7" r="2" fill="#63a5cc" />
              </svg>
              <span>{{ name }}</span>
            </li>
          </ul>
          <div class="scroll">
            <div class="arrow"><svg width="9" height="6" viewBox="0 0 9 6"><path d="M1 5l3.500-3.500L8 5" /></svg></div>
            <div class="thumb"></div>
            <div class="arrow down"><svg width="9" height="6" viewBox="0 0 9 6"><path d="M1 1l3.500 3.500L8 1" /></svg></div>
          </div>
        </div>
        <div class="filter">Filter...</div>
        <button class="add">Add packages</button>
        <button class="show">Show Packages</button>
        <label v-for="mode in modes" :key="mode" class="radio">
          <i :class="{ on: mode === selectedMode }"></i>{{ mode }}
        </label>
        <div class="root-label">Root class</div>
        <div class="root-input"></div>
        <label class="delete">
          <i class="check"><svg width="10" height="10" viewBox="0 0 10 10"><path d="M1 5l3 3.200L9 1.500" /></svg></i>
          Delete Interfaces
        </label>
        <button class="visualize">Visualize</button>
        <div class="patterns">(Anti-)Patterns</div>
        <div class="combo-row">
          <div class="combo">
            <span>----------------------</span>
            <b><svg width="10" height="8" viewBox="0 0 10 8"><path d="M1 1.500l4 4 4-4" /></svg></b>
          </div>
          <div class="help-button">?</div>
        </div>
      </aside>

      <main class="canvas">
        <svg class="map" width="2361" height="1286" viewBox="192 99 2361 1286">
          <g v-for="(f, i) in frames" :key="i">
            <text class="title" :x="f.x + f.w / 2" :y="f.y - 3.6" :font-size="TITLE_SIZE">{{ f.name }}</text>
            <rect class="frame" :x="f.x" :y="f.y" :width="f.w" :height="f.h" />
            <g v-for="(g, j) in f.groups" :key="j">
              <text class="label" :x="g.mid" :y="g.y - 2.2" :font-size="LABEL_SIZE">{{ g.text }}</text>
              <rect class="block" :x="g.x + 0.4" :y="g.y + 0.4" :width="g.w - 0.6" :height="g.h - 0.6" :fill="g.fill" />
              <path v-if="g.plain" class="plain" :d="g.plain" />
              <path v-for="(m, k) in g.marked" :key="k" class="marked" :class="{ soft: m.soft }" :d="m.d" :fill="m.fill" />
            </g>
          </g>
        </svg>
        <span class="help">Help</span>
      </main>
    </div>
  </div>
</template>

<style>
body {
  background: #d1d1d1;
}
</style>

<style scoped>
.window {
  box-sizing: border-box;
  width: 2560px;
  height: 1390px;
  overflow: hidden;
  display: flex;
  flex-direction: column;
  border: 1px solid #999;
  border-top: 0;
  border-bottom: 0;
  background: #d1d1d1;
  box-shadow: inset 0 1px #e4e4e4, inset 0 2px #929292;
  font: 12px/20px "Noto Sans CJK SC", sans-serif;
  color: #111;
}
.titlebar {
  height: 30px;
  display: flex;
  align-items: center;
  justify-content: space-between;
}
.controls {
  margin-left: -1px;
}
h1 {
  margin: 0;
  font-size: 13.4px;
  font-weight: 400;
  color: #000;
  transform: translateX(-22px);
}
.menu {
  margin-right: 8px;
}
.toolbar {
  height: 43px;
  display: flex;
}
.tool {
  display: flex;
  flex-direction: column;
  align-items: center;
  height: 37px;
}
.import {
  width: 64px;
  margin-left: 7px;
}
.export {
  width: 52px;
  margin-left: 8px;
}
.export svg {
  margin: 6px 0 0 3px;
}
.mse {
  margin-top: 5px;
  height: 10px;
  font: bold 6.5px/10px "Liberation Sans", sans-serif;
}
.caption {
  margin-top: auto;
  font-size: 8.3px;
  line-height: 14px;
  white-space: nowrap;
}
.tabs {
  height: 26px;
  display: flex;
  margin-left: 1147px;
}
.tab {
  box-sizing: border-box;
  height: 24px;
  border: 1px solid #c3c3c3;
  background: #e5e5e5;
  text-align: center;
  line-height: 22px;
  color: #000;
}
.current {
  width: 1306px;
}
.instructions {
  width: 76px;
}
.question {
  width: 24px;
}
.question,
.help-button {
  color: #4a96bf;
  font-weight: 700;
}
.body {
  flex: 1;
  display: flex;
}
.side {
  width: 180px;
  margin-left: 4px;
  display: flex;
  flex-direction: column;
}
.list {
  height: 225px;
  display: flex;
  background: #fff;
  overflow: hidden;
}
ul {
  list-style: none;
  margin: 0;
  padding: 0 0 0 4px;
  width: 163px;
  overflow: hidden;
}
li {
  height: 20px;
  display: flex;
  align-items: center;
  white-space: nowrap;
}
li svg {
  flex: none;
  margin: 1px 1px 0 9px;
}
.check {
  flex: none;
  box-sizing: border-box;
  width: 12px;
  height: 12px;
  border: 1px solid #8595b0;
  background: linear-gradient(135deg, #dcf3ff, #fff);
  margin-top: -2px;
}
.scroll {
  width: 13px;
  display: flex;
  flex-direction: column;
  background: #f4f4f4;
}
.arrow {
  height: 13px;
  display: flex;
  align-items: center;
  justify-content: center;
  background: #e9e9e9;
}
.arrow path,
.combo path {
  fill: none;
  stroke: #888;
  stroke-width: 2.2;
}
.thumb {
  height: 13px;
  margin: 1px 1px auto;
  background: #e4e4e4;
}
.filter {
  height: 21px;
  padding-left: 6px;
  background: #fff;
  color: #777;
  line-height: 22px;
}
button {
  flex: none;
  box-sizing: border-box;
  height: 29px;
  padding: 0 3px 0 0;
  border: 1px solid #c3c3c3;
  background: #e5e5e5;
  font: inherit;
  color: #000;
}
.add {
  margin-top: 6px;
}
.show {
  margin: 2px 0 1px;
}
.radio {
  height: 24px;
  display: flex;
  align-items: center;
}
.radio i {
  box-sizing: border-box;
  width: 10px;
  height: 10px;
  margin: 0 6px 0 4px;
  border: 1px solid #111;
  border-radius: 50%;
}
.radio .on {
  background: #808080;
}
.root-label {
  height: 23px;
  line-height: 18px;
}
.root-input {
  height: 21px;
  background: #fff;
}
.delete {
  height: 44px;
  display: flex;
  align-items: center;
}
.delete .check {
  margin: -3px 6px 0 2px;
}
.delete svg {
  display: block;
}
.delete path {
  fill: none;
  stroke: #43506b;
  stroke-width: 1.5;
}
.visualize {
  height: 30px;
}
.patterns {
  margin-top: auto;
  height: 19px;
}
.combo-row {
  display: flex;
  gap: 2px;
  margin-bottom: 7px;
}
.combo {
  box-sizing: border-box;
  width: 152px;
  height: 27px;
  display: flex;
  justify-content: space-between;
  border: 1px solid #c3c3c3;
  background: #fff;
}
.combo span {
  padding: 2px 0 0 8px;
}
.combo b {
  width: 17px;
  display: flex;
  align-items: center;
  justify-content: center;
  border-left: 1px solid #c3c3c3;
  background: #b0d4fb;
}
.help-button {
  box-sizing: border-box;
  width: 24px;
  height: 27px;
  border: 1px solid #c3c3c3;
  background: #e5e5e5;
  text-align: center;
  line-height: 25px;
}
.canvas {
  position: relative;
  width: 2361px;
  height: 1286px;
  margin-left: 7px;
  background: #eaeaea;
}
.map {
  display: block;
}
.map text {
  font-family: "Noto Sans CJK SC", sans-serif;
  text-anchor: middle;
  text-rendering: geometricPrecision;
}
.title {
  fill: #555;
}
.label {
  fill: #555;
}
.frame {
  fill: none;
  stroke: #b4b4b4;
  stroke-width: 1;
}
.block {
  stroke: #aaa;
  stroke-width: 0.7;
}
.plain {
  fill: none;
  stroke: rgba(0, 0, 0, 0.22);
  stroke-width: 0.9;
}
.marked {
  stroke: rgba(0, 0, 0, 0.72);
  stroke-width: 1;
}
.marked.soft {
  stroke: rgba(0, 0, 0, 0.4);
}
.help {
  position: absolute;
  top: 3px;
  right: 5px;
  font-size: 12.5px;
  color: #9aa5a8;
}
</style>
